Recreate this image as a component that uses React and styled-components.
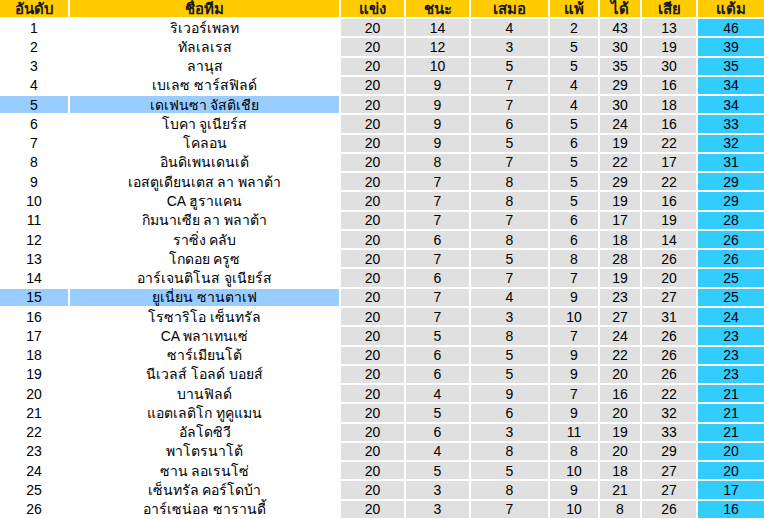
import React from "react";
import styled, { createGlobalStyle } from "styled-components";

const GlobalStyle = createGlobalStyle`
  html, body {
    margin: 0;
    padding: 0;
    background: #fff;
  }
  body {
    font-family: Tahoma, "Liberation Sans", "Noto Sans", "DejaVu Sans", sans-serif;
    color: #000;
  }
`;

const columns = [
  { text: "อันดับ", key: "rank", kind: "rank" },
  { text: "ชื่อทีม", key: "name", kind: "team" },
  { text: "แข่ง", key: "played", kind: "stat" },
  { text: "ชนะ", key: "won", kind: "stat" },
  { text: "เสมอ", key: "drawn", kind: "stat" },
  { text: "แพ้", key: "lost", kind: "stat" },
  { text: "ได้", key: "goalsFor", kind: "stat" },
  { text: "เสีย", key: "goalsAgainst", kind: "stat" },
  { text: "แต้ม", key: "points", kind: "points" },
];

const teams = [
  ["ริเวอร์เพลท", 20, 14, 4, 2, 43, 13, 46],
  ["ทัลเลเรส", 20, 12, 3, 5, 30, 19, 39],
  ["ลานุส", 20, 10, 5, 5, 35, 30, 35],
  ["เบเลซ ซาร์สฟิลด์", 20, 9, 7, 4, 29, 16, 34],
  ["เดเฟนซา จัสติเชีย", 20, 9, 7, 4, 30, 18, 34],
  ["โบคา จูเนียร์ส", 20, 9, 6, 5, 24, 16, 33],
  ["โคลอน", 20, 9, 5, 6, 19, 22, 32],
  ["อินดิเพนเดนเต้", 20, 8, 7, 5, 22, 17, 31],
  ["เอสตูเดียนเตส ลา พลาต้า", 20, 7, 8, 5, 29, 22, 29],
  ["CA ฮูราแคน", 20, 7, 8, 5, 19, 16, 29],
  ["กิมนาเซีย ลา พลาต้า", 20, 7, 7, 6, 17, 19, 28],
  ["ราซิ่ง คลับ", 20, 6, 8, 6, 18, 14, 26],
  ["โกดอย ครูซ", 20, 7, 5, 8, 28, 26, 26],
  ["อาร์เจนติโนส จูเนียร์ส", 20, 6, 7, 7, 19, 20, 25],
  ["ยูเนี่ยน ซานตาเฟ", 20, 7, 4, 9, 23, 27, 25],
  ["โรซาริโอ เซ็นทรัล", 20, 7, 3, 10, 27, 31, 24],
  ["CA พลาเทนเซ่", 20, 5, 8, 7, 24, 26, 23],
  ["ซาร์เมียนโต้", 20, 6, 5, 9, 22, 26, 23],
  ["นีเวลส์ โอลด์ บอยส์", 20, 6, 5, 9, 20, 26, 23],
  ["บานฟิลด์", 20, 4, 9, 7, 16, 22, 21],
  ["แอตเลติโก ทูคูแมน", 20, 5, 6, 9, 20, 32, 21],
  ["อัลโดซิวี", 20, 6, 3, 11, 19, 33, 21],
  ["พาโตรนาโต้", 20, 4, 8, 8, 20, 29, 20],
  ["ซาน ลอเรนโซ่", 20, 5, 5, 10, 18, 27, 20],
  ["เซ็นทรัล คอร์โดบ้า", 20, 3, 8, 9, 21, 27, 17],
  ["อาร์เซน่อล ซารานดี้", 20, 3, 7, 10, 8, 26, 16],
].map((row, i) => ({
  rank: i + 1,
  name: row[0],
  played: row[1],
  won: row[2],
  drawn: row[3],
  lost: row[4],
  goalsFor: row[5],
  goalsAgainst: row[6],
  points: row[7],
  highlight: i === 4 || i === 14,
}));

// 764 wide standings grid, 2px white spacing between every cell
const Table = styled.div`
  display: grid;
  grid-template-columns: 68px 269px 63px 63px 77px 48px 40px 54px 66px;
  grid-template-rows: 17px;
  grid-auto-rows: 17.28px;
  gap: 2px;
  width: 764px;
  font-size: 14px;
  line-height: 1;
`;

const HeadCell = styled.div`
  display: flex;
  align-items: center;
  justify-content: center;
  background: #ffcc00;
  font-size: 15px;
  font-weight: bold;
  color: #1a1a1a;
`;

const cellBg = {
  rank: "#ffffff",
  team: "#ffffff",
  stat: "#e0e0e0",
  points: "#33ccff",
};

const Cell = styled.div`
  display: flex;
  align-items: center;
  justify-content: center;
  white-space: nowrap;
  background: ${(p) =>
    p.$highlight && (p.$kind === "rank" || p.$kind === "team")
      ? "#99ccff"
      : cellBg[p.$kind]};
`;

const App = () => {
  return (
    <>
      <GlobalStyle />
      <Table>
        {columns.map((col) => (
          <HeadCell key={col.key}>{col.text}</HeadCell>
        ))}
        {teams.map((team) =>
          columns.map((col) => (
            <Cell
              key={`${team.rank}-${col.key}`}
              $kind={col.kind}
              $highlight={team.highlight}
            >
              {team[col.key]}
            </Cell>
          ))
        )}
      </Table>
    </>
  );
};

export default App;
